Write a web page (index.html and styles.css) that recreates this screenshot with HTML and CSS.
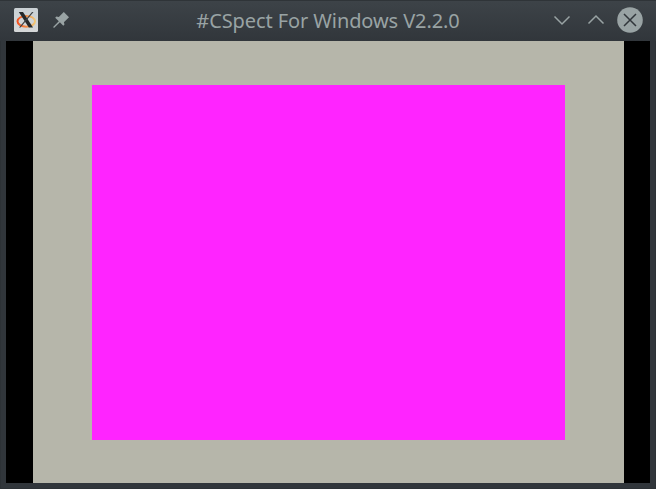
FILE: index.html
```html
<!DOCTYPE html>
<html lang="en"><head><meta charset="utf-8"><title>#CSpect For Windows V2.2.0</title><link rel="stylesheet" href="styles.css"></head>
<body><div class="window">
<header class="titlebar">
<div class="left">
<svg width="24" height="24" viewBox="0 0 24 24">
<defs>
<linearGradient id="ring" x1="0" x2="1"><stop offset="0" stop-color="#f4501e"/><stop offset=".5" stop-color="#f28a45"/><stop offset="1" stop-color="#f0c777"/></linearGradient>
<linearGradient id="tile" x1="0" x2="0" y1="0" y2="1"><stop offset="0" stop-color="#c9d0d4"/><stop offset="1" stop-color="#d5d7d8"/></linearGradient>
</defs>
<rect width="24" height="24" rx="1.500" fill="url(#tile)"/>
<ellipse cx="12.300" cy="13.300" rx="8.800" ry="5.400" fill="none" stroke="url(#ring)" stroke-width="2"/>
<path d="M4.800 4h4.200l10 15.500h-4.200z" fill="#24282b"/>
<path d="M18 4h1.500L6.500 19.500H5z" fill="#3b3f42"/>
</svg>
<svg width="16" height="16" viewBox="0 0 16 16"><path d="M10.800 0L16 5.200 10.900 10.300l.6 2.200-1.200 1.200-3.400-3.400L1 16 .1 15.100 5.800 9.300 2.200 5.700l1.200-1.200 2.400.5z" fill="#99a3a4"/></svg>
</div>
<h1 class="title">#CSpect For Windows V2.2.0</h1>
<div class="controls">
<svg class="minimize" width="18" height="18" viewBox="0 0 18 18"><path d="M1.500 5.500L9 13l7.500-7.500" class="line"/></svg>
<svg class="maximize" width="18" height="18" viewBox="0 0 18 18"><path d="M1.500 12.500L9 5l7.500 7.500" class="line"/></svg>
<svg width="26" height="26" viewBox="0 0 26 26"><circle cx="13" cy="13" r="12.800" fill="#99a3a4"/><path d="M7 7l12 12M19 7L7 19" stroke="#31363b" stroke-width="1.500"/></svg>
</div></header>
<main class="screen"><div class="border"><div class="paper"></div></div></main>
</div></body></html>
```

FILE: styles.css
```css
* { box-sizing: border-box; }
body { margin: 0; }
.window { width: 656px; height: 489px; padding: 0 6px 6px; background: #31363b; box-shadow: inset 0 0 0 1px #2d3236; display: flex; flex-direction: column; }
.titlebar { height: 41px; margin: 0 -6px; padding: 0 13px 2px 14px; display: grid; grid-template-columns: 1fr auto 1fr; align-items: center; background: linear-gradient(#3d4348, #31363b); border: 1px solid #2f3438; border-width: 1px 0 0; }
.left { display: flex; align-items: center; gap: 15px; }
.title { margin: 0; padding-right: 1px; font: 400 20px "Noto Sans", sans-serif; letter-spacing: -0.09px; color: #99a3a4; white-space: nowrap; }
.controls { display: flex; align-items: center; justify-content: flex-end; }
.minimize { margin-right: 16px; }
.maximize { margin-right: 12px; }
.line { fill: none; stroke: #99a3a4; stroke-width: 1.500; }
.screen { flex: 1; background: #000; padding: 0 26px 0 27px; display: flex; }
.border { flex: 1; background: #b6b6aa; padding: 44px 59px 43px; display: flex; }
.paper { flex: 1; background: #ff24ff; }
```
